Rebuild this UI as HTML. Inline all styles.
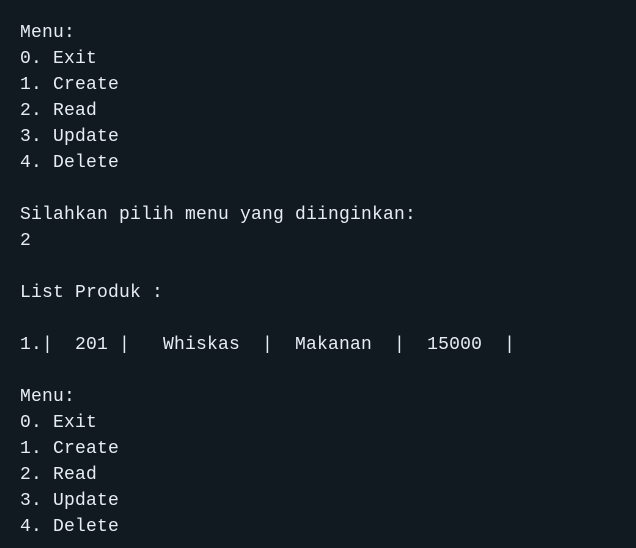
<!DOCTYPE html>
<html><head><style>
html,body{margin:0;padding:0;background:#111a21;width:636px;height:548px;overflow:hidden}
pre{margin:0;padding:20px 0 0 20px;font-family:"Liberation Mono",monospace;font-size:18px;letter-spacing:0.2px;line-height:26px;color:#e6edf3}
</style></head><body><pre>Menu:
0. Exit
1. Create
2. Read
3. Update
4. Delete

Silahkan pilih menu yang diinginkan:
2

List Produk :

1.|  201 |   Whiskas  |  Makanan  |  15000  |

Menu:
0. Exit
1. Create
2. Read
3. Update
4. Delete</pre></body></html>
